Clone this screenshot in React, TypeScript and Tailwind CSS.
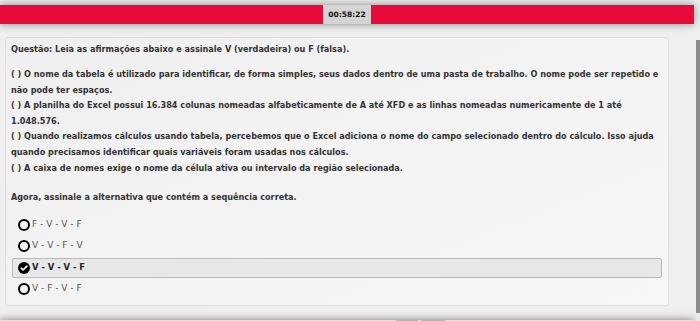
import React from 'react';

const options = [
  { label: 'F - V - V - F', checked: false },
  { label: 'V - V - F - V', checked: false },
  { label: 'V - V - V - F', checked: true },
  { label: 'V - F - V - F', checked: false },
];

const statements = [
  '( ) O nome da tabela é utilizado para identificar, de forma simples, seus dados dentro de uma pasta de trabalho. O nome pode ser repetido e não pode ter espaços.',
  '( ) A planilha do Excel possui 16.384 colunas nomeadas alfabeticamente de A até XFD e as linhas nomeadas numericamente de 1 até 1.048.576.',
  '( ) Quando realizamos cálculos usando tabela, percebemos que o Excel adiciona o nome do campo selecionado dentro do cálculo. Isso ajuda quando precisamos identificar quais variáveis foram usadas nos cálculos.',
  '( ) A caixa de nomes exige o nome da célula ativa ou intervalo da região selecionada.',
];

const Radio = ({ checked }: { checked: boolean }) =>
  checked ? (
    <svg width="12" height="12" viewBox="0 0 12 12" className="shrink-0">
      <circle cx="6" cy="6" r="6" fill="#000" />
      <path d="M3.2 6.2 L5.1 8 L8.9 4.1" stroke="#fff" strokeWidth="1.6" fill="none" strokeLinecap="round" strokeLinejoin="round" />
    </svg>
  ) : (
    <span className="w-[12px] h-[12px] shrink-0 rounded-full border-2 border-black" />
  );

export default function App() {
  return (
    <div className="w-[700px] h-[321px] overflow-hidden flex bg-[#efefef] font-['DejaVu_Sans',sans-serif]">
      <div className="w-[694px] flex flex-col shrink-0">
        {/* timer bar */}
        <div className="mt-[5px] h-[19px] shrink-0 bg-[#e80a3a] flex justify-center shadow-[0_0_8px_rgba(0,0,0,0.45)]">
          <div className="w-[48px] h-full bg-[#d4d4d4] flex items-center justify-center text-[7.5px] font-bold text-[#111]">
            00:58:22
          </div>
        </div>

        {/* question card */}
        <div className="mt-[13px] ml-[5px] w-[664px] h-[269px] shrink-0 border border-[#dedede] rounded-[3px] bg-gradient-to-br from-[#efefef] to-[#f7f7f7] pl-[5px] pr-[3px] pt-[4px] text-[#333] text-[8.15px] font-bold leading-[15.6px]">
          <p>Questão: Leia as afirmações abaixo e assinale V (verdadeira) ou F (falsa).</p>
          <div className="mt-[9.4px]">
            {statements.map((s) => (
              <p key={s}>{s}</p>
            ))}
          </div>
          <p className="mt-[14px]">Agora, assinale a alternativa que contém a sequência correta.</p>

          <div className="mt-[9px] mr-[2px] flex flex-col gap-[1.4px]">
            {options.map((o) => (
              <div
                key={o.label}
                className={
                  o.checked
                    ? 'h-[20px] mx-[1px] flex items-center pl-[5px] border border-[#b9b9b9] rounded-[2px] bg-[#e7e7e7]'
                    : 'h-[20px] mx-[1px] flex items-center pl-[5px] border border-transparent'
                }
              >
                <Radio checked={o.checked} />
                <span
                  className={
                    o.checked
                      ? 'ml-[2px] text-[8.4px] font-bold text-[#222]'
                      : 'ml-[2px] text-[9px] font-normal text-[#555]'
                  }
                >
                  {o.label}
                </span>
              </div>
            ))}
          </div>
        </div>

        {/* footer */}
        <div className="mt-[14px] h-[30px] shrink-0 bg-[#ffd7d9] shadow-[0_0_8px_rgba(0,0,0,0.5)] flex gap-[3px] pl-[396px]">
          <div className="w-[22px] h-[20px] bg-[#c9c9c9] border border-[#b5b5b5]" />
          <div className="w-[24px] h-[20px] bg-[#c9c9c9] border border-[#b5b5b5]" />
        </div>
      </div>

      {/* scrollbar */}
      <div className="flex-1 pl-[2px] pt-[40px] pb-[8px] flex">
        <div className="w-full bg-[#8b8b8b]" />
      </div>
    </div>
  );
}
